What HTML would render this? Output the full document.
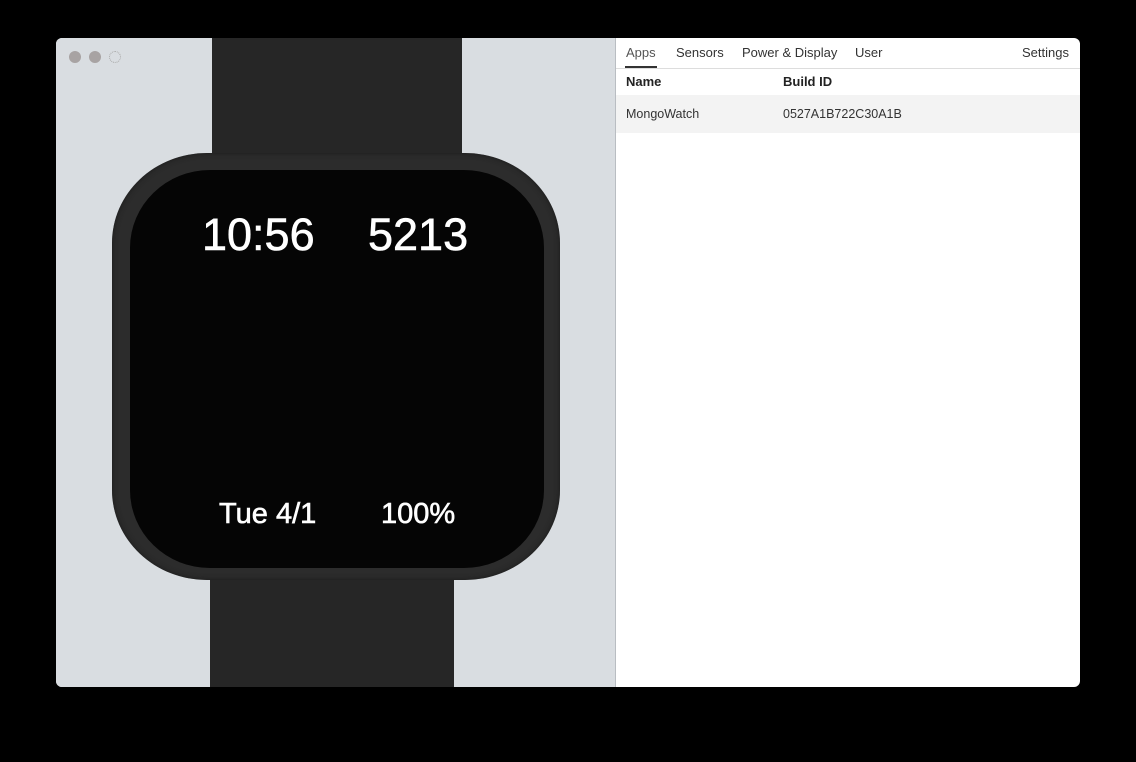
<!DOCTYPE html>
<html><head><style>
body{margin:0;width:1136px;height:762px;background:#000;position:relative;overflow:hidden;font-family:"Liberation Sans","DejaVu Sans",sans-serif}
.win{position:absolute;left:56px;top:38px;width:1024px;height:649px;border-radius:6px;overflow:hidden;background:#fff}
.left{position:absolute;left:0;top:0;width:559px;height:649px;background:#d9dde1;border-right:1px solid #b9bdc2}
.dot{position:absolute;top:13px;width:12px;height:12px;border-radius:50%;background:#a8a3a3}
.strap{position:absolute;background:#262626}
.case{position:absolute;left:56px;top:115px;width:448px;height:427px;border-radius:95px/90px;background:#2c2c2c;box-shadow:inset 0 0 6px #1a1a1a}
.screen{position:absolute;left:18px;top:17px;width:414px;height:398px;border-radius:80px/78px;background:#050505}
.wt{position:absolute;color:#fff;font-family:"Liberation Sans",sans-serif;white-space:nowrap;line-height:1;-webkit-text-stroke:0.6px #fff}
.right{position:absolute;left:560px;top:0;width:464px;height:649px}
.tab{position:absolute;top:7px;font-size:13px;color:#333}
.hdr{position:absolute;top:30px;left:0;width:464px;height:26px;border-top:1px solid #ddd;border-bottom:1px solid #ddd}
.row{position:absolute;top:57px;left:0;width:464px;height:38px;background:#f3f3f3;font-size:12.5px;color:#333}
</style></head><body>
<div class="win">
 <div class="left">
  <div class="dot" style="left:13px"></div>
  <div class="dot" style="left:33px"></div>
  <div class="dot" style="left:53px;background:none;border:1px dotted #aaa;width:10px;height:10px"></div>
  <div class="strap" style="left:156px;top:0;width:250px;height:130px"></div>
  <div class="strap" style="left:154px;top:520px;width:244px;height:129px"></div>
  <div class="case"><div class="screen"></div></div>
  <div class="wt" style="left:146px;top:174px;font-size:45px">10:56</div>
  <div class="wt" style="left:312px;top:174px;font-size:45px">5213</div>
  <div class="wt" style="left:163px;top:462px;font-size:29px">Tue 4/1</div>
  <div class="wt" style="left:325px;top:462px;font-size:29px">100%</div>
 </div>
 <div class="right">
  <div class="tab" style="left:10px;color:#555">Apps</div>
  <div style="position:absolute;left:9px;top:28px;width:32px;height:2px;background:#333"></div>
  <div class="tab" style="left:60px">Sensors</div>
  <div class="tab" style="left:126px">Power &amp; Display</div>
  <div class="tab" style="left:239px">User</div>
  <div class="tab" style="left:406px">Settings</div>
  <div class="hdr"><span style="position:absolute;left:10px;top:5px;font-size:13px;font-weight:bold;color:#222">Name</span><span style="position:absolute;left:167px;top:5px;font-size:13px;font-weight:bold;color:#222">Build ID</span></div>
  <div class="row"><span style="position:absolute;left:10px;top:12px">MongoWatch</span><span style="position:absolute;left:167px;top:12px">0527A1B722C30A1B</span></div>
 </div>
</div>
</body></html>
